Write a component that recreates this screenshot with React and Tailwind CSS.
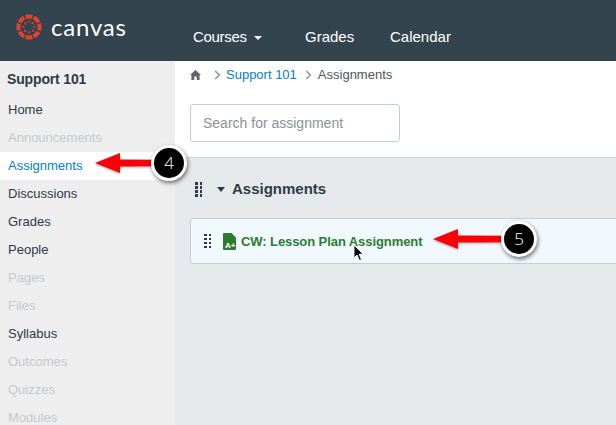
import React from "react";

const font = { fontFamily: '"Liberation Sans", Arial, sans-serif' };

function Logo() {
  const wedges = [0, 45, 90, 135, 180, 225, 270, 315];
  return (
    <svg width="26" height="26" viewBox="0 0 28 28" className="shrink-0">
      {wedges.map((a) => (
        <g key={a} transform={`rotate(${a} 14 14)`}>
          <path d="M9.8 1.1 A13.6 13.6 0 0 1 18.2 1.1 L17 5.3 A9.2 9.2 0 0 0 11 5.3 Z" fill="#e8402b" />
          <circle cx="14" cy="7.9" r="1" fill="#e8402b" />
          <circle cx="16.6" cy="9.8" r="0.55" fill="#e8402b" />
        </g>
      ))}
    </svg>
  );
}

function Grip({ className }) {
  return (
    <div className={`grid grid-cols-2 gap-x-[2px] gap-y-[1.5px] ${className}`}>
      {Array.from({ length: 8 }).map((_, i) => (
        <span key={i} className="w-[2.5px] h-[2.5px] bg-[#2d3b45]" />
      ))}
    </div>
  );
}

function Chevron() {
  return (
    <svg width="7" height="10" viewBox="0 0 7 10" className="shrink-0">
      <path d="M1.2 1 L5.4 5 L1.2 9" fill="none" stroke="#8b969e" strokeWidth="1.6" />
    </svg>
  );
}

function Callout({ n, className }) {
  return (
    <div className={`absolute w-[36px] h-[36px] rounded-full bg-black border-[3px] border-white shadow-[1px_2px_4px_rgba(0,0,0,0.55)] flex items-center justify-center text-white text-[17px] ${className}`} style={{ fontFamily: '"Open Sans", sans-serif', fontWeight: 300 }}>
      {n}
    </div>
  );
}

function Arrow({ className, width }) {
  return (
    <svg width={width} height="26" viewBox={`0 0 ${width} 26`} className={`absolute drop-shadow-[0_1px_1px_rgba(0,0,0,0.35)] ${className}`}>
      <path d={`M0 13 L25 3 L25 9.5 L${width} 9.8 L${width} 16.2 L25 16.5 L25 23 Z`} fill="#fb0007" />
    </svg>
  );
}

const items = [
  ["Home", "text-[#2d3b45]"],
  ["Announcements", "text-[#c5c9cc]"],
  ["Assignments", "text-[#0081c9] bg-white"],
  ["Discussions", "text-[#2d3b45]"],
  ["Grades", "text-[#2d3b45]"],
  ["People", "text-[#2d3b45]"],
  ["Pages", "text-[#c5c9cc]"],
  ["Files", "text-[#c5c9cc]"],
  ["Syllabus", "text-[#2d3b45]"],
  ["Outcomes", "text-[#c5c9cc]"],
  ["Quizzes", "text-[#c5c9cc]"],
  ["Modules", "text-[#c5c9cc]"],
];

export default function App() {
  return (
    <div style={font} className="relative w-[616px] h-[425px] overflow-hidden bg-white flex flex-col">
      <header className="h-[61px] shrink-0 bg-[#34444f] flex items-center">
        <div className="w-[175px] shrink-0 flex items-center pl-[16px] gap-[9px] pb-[8px]">
          <Logo />
          <span style={{ fontFamily: '"Lato", sans-serif' }} className="text-white text-[24px] leading-none tracking-[0.8px]">canvas</span>
        </div>
        <nav className="flex items-center text-white text-[15px] pt-[14px] pl-[18px]">
          <span className="flex items-center gap-[7px] w-[112px] tracking-[-0.3px]">
            Courses
            <span className="w-0 h-0 border-x-[4px] border-x-transparent border-t-[4px] border-t-white" />
          </span>
          <span className="w-[85px]">Grades</span>
          <span>Calendar</span>
        </nav>
      </header>
      <div className="flex flex-1 min-h-0">
        <aside className="w-[175px] shrink-0 bg-[#eeeeee] overflow-hidden">
          <div className="h-[35px] pl-[7px] pt-[10px] font-bold text-[14px] leading-[16px] tracking-[-0.15px] text-[#2d3b45]">Support 101</div>
          {items.map(([label, cls]) => (
            <div key={label} className={`h-[28px] pl-[8px] flex items-center text-[13px] ${cls}`}>{label}</div>
          ))}
        </aside>
        <main className="flex-1 min-w-0 flex flex-col">
          <div className="h-[96px] shrink-0 pl-[15px]">
            <div className="flex items-center h-[28px] text-[13px] text-[#4b5860]">
              <svg width="11" height="10" viewBox="0 0 11 10" className="shrink-0">
                <path d="M5.5 0 L11 5 L9.6 5 L9.6 10 L6.7 10 L6.7 6.6 L4.3 6.6 L4.3 10 L1.4 10 L1.4 5 L0 5 Z" fill="#5b6770" />
              </svg>
              <span className="ml-[13px] mr-[5px] flex"><Chevron /></span>
              <span className="text-[#0081c9]">Support 101</span>
              <span className="ml-[8px] mr-[6px] flex"><Chevron /></span>
              <span>Assignments</span>
            </div>
            <div className="mt-[15px] w-[210px] h-[38px] rounded-[3px] border border-[#c7cdd1] flex items-center pl-[12px] text-[14px] text-[#8a9298]">
              Search for assignment
            </div>
          </div>
          <div className="flex-1 bg-[#e6e9ec] border-t border-[#d3d8dc] pl-[15px]">
            <div className="h-[60px] flex items-center pt-[3px]">
              <Grip className="ml-[5px]" />
              <span className="ml-[15px] w-0 h-0 border-x-[4.5px] border-x-transparent border-t-[5px] border-t-[#2d3b45]" />
              <span className="ml-[7px] font-bold text-[15px] text-[#2d3b45]">Assignments</span>
            </div>
            <div className="h-[46px] -mr-[4px] rounded-l-[3px] border border-[#c7cdd1] bg-[#f2f9fe] flex items-center pl-[12px]">
              <Grip className="ml-[1px]" />
              <svg width="13" height="17" viewBox="0 0 13 17" className="ml-[12px] shrink-0">
                <path d="M0 1 Q0 0 1 0 L8.5 0 L13 4.5 L13 16 Q13 17 12 17 L1 17 Q0 17 0 16 Z" fill="#2a7d2f" />
                <text x="2" y="14.5" fontSize="8" fontWeight="700" fill="#ffffff">A+</text>
              </svg>
              <span className="ml-[5px] pt-[1px] font-bold text-[13px] tracking-[-0.08px] text-[#2a7d2f]">CW: Lesson Plan Assignment</span>
            </div>
          </div>
        </main>
      </div>

      <Arrow width={60} className="left-[95px] top-[150px]" />
      <Callout n="4" className="left-[151px] top-[145px]" />
      <Arrow width={72} className="left-[433px] top-[226px]" />
      <Callout n="5" className="left-[501px] top-[221px]" />
      <svg width="12" height="18" viewBox="0 0 12 18" className="absolute left-[353px] top-[244px]">
        <path d="M1 1 L1 14 L4 11 L6.5 16.5 L8.5 15.5 L6 10.3 L10 10 Z" fill="#000" stroke="#fff" strokeWidth="0.9" />
      </svg>
    </div>
  );
}
